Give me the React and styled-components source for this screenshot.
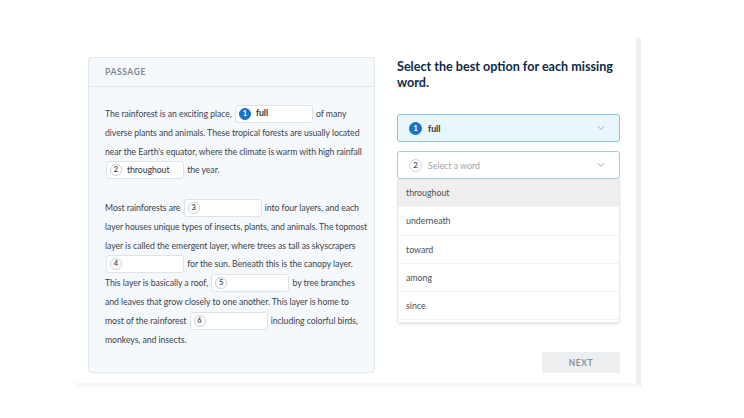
import styled, { createGlobalStyle } from "styled-components";
import { ChevronDown } from "lucide-react";

const Global = createGlobalStyle`
  body {
    margin: 0;
    background: #ffffff;
    font-family: "Lato", "Liberation Sans", sans-serif;
  }
`;

const Frame = styled.div`
  margin: 38px 0 0 75px;
  width: 566px;
  height: 349px;
  box-sizing: border-box;
  border-right: 5px solid #eeeff1;
  border-bottom: 4px solid #f7f7f7;
  display: flex;
  gap: 22px;
  padding: 19px 0 0 13px;
`;

const Card = styled.section`
  width: 287px;
  height: 316px;
  box-sizing: border-box;
  background: #f5f9fb;
  border: 1px solid #e1e7eb;
  border-radius: 4px;
`;

const CardHead = styled.div`
  height: 29px;
  box-sizing: border-box;
  border-bottom: 1px solid #e1e7eb;
  padding: 0 16px;
  display: flex;
  align-items: center;
  font-size: 8.5px;
  font-weight: 700;
  letter-spacing: 0.6px;
  color: #7d878f;
`;

const Body = styled.div`
  padding: 18px 16px 0 16px;
`;

const Para = styled.p`
  margin: 0 0 18.8px 0;
  font-size: 8.7px;
  line-height: 18.8px;
  letter-spacing: -0.05px;
  color: #3a444e;
  white-space: nowrap;
`;

const Blank = styled.span`
  display: inline-flex;
  align-items: center;
  gap: 5px;
  vertical-align: middle;
  width: 78px;
  height: 18px;
  box-sizing: border-box;
  margin: -2px 1px 0;
  padding-left: 3px;
  background: #ffffff;
  border: 1px solid #dde3e7;
  border-radius: 3px;
  font-size: 8.7px;
  font-weight: ${(p) => (p.$bold ? 700 : 400)};
  color: #2c3640;
`;

const Badge = styled.span`
  width: 12px;
  height: 12px;
  flex: none;
  box-sizing: border-box;
  border-radius: 50%;
  display: inline-flex;
  align-items: center;
  justify-content: center;
  font-size: 7.5px;
  font-weight: 700;
  line-height: 1;
  color: ${(p) => (p.$active ? "#ffffff" : "#4a545c")};
  background: ${(p) => (p.$active ? "#1673c6" : "#ffffff")};
  border: 1px solid ${(p) => (p.$active ? "#1673c6" : "#c9d0d5")};
`;

const Side = styled.div`
  width: 223px;
  height: 316px;
  display: flex;
  flex-direction: column;
`;

const Title = styled.h2`
  margin: 0 0 23px 0;
  padding-top: 2px;
  font-size: 12.6px;
  line-height: 16px;
  font-weight: 700;
  color: #0e2a47;
`;

const Select = styled.div`
  height: 28px;
  box-sizing: border-box;
  display: flex;
  align-items: center;
  gap: 6px;
  padding: 0 12px 0 11px;
  border: 1px solid ${(p) => (p.$active ? "#8cc4e2" : "#9dcbe4")};
  border-radius: 3px;
  background: ${(p) => (p.$active ? "#e9f6fc" : "#ffffff")};
  font-size: 8.8px;
  color: ${(p) => (p.$placeholder ? "#9aa3aa" : "#25303a")};
  font-weight: ${(p) => (p.$placeholder ? 400 : 700)};
  margin-bottom: 9px;

  svg {
    margin-left: auto;
    color: #8d969d;
  }
`;

const SelectBadge = styled(Badge)`
  width: 13px;
  height: 13px;
  font-size: 8px;
`;

const Anchor = styled.div`
  position: relative;
`;

const Menu = styled.ul`
  position: absolute;
  top: -9px;
  left: 0;
  right: 0;
  margin: 0;
  padding: 0 0 2px 0;
  list-style: none;
  background: #ffffff;
  border: 1px solid #e6e8ea;
  border-top: none;
  border-radius: 0 0 3px 3px;
  box-shadow: 0 2px 3px rgba(0, 0, 0, 0.08);
`;

const Option = styled.li`
  height: 27.3px;
  display: flex;
  align-items: center;
  padding-left: 8px;
  font-size: 8.8px;
  color: #4a4f54;
  background: ${(p) => (p.$hover ? "#efefef" : "#ffffff")};
  border-bottom: 1px solid #f1f2f3;
`;

const Next = styled.button`
  margin-top: auto;
  align-self: flex-end;
  width: 78px;
  height: 21px;
  border: none;
  border-radius: 2px;
  background: #eceef0;
  color: #8c9197;
  font-family: inherit;
  font-size: 8.5px;
  font-weight: 700;
  letter-spacing: 0.6px;
`;

function Gap({ n, word, active }) {
  return (
    <Blank $bold={active}>
      <Badge $active={active}>{n}</Badge>
      {word}
    </Blank>
  );
}

const options = ["throughout", "underneath", "toward", "among", "since"];

export default function App() {
  return (
    <>
      <Global />
      <Frame>
        <Card>
          <CardHead>PASSAGE</CardHead>
          <Body>
            <Para>
              The rainforest is an exciting place, <Gap n={1} word="full" active /> of many
              <br />
              diverse plants and animals. These tropical forests are usually located
              <br />
              near the Earth's equator, where the climate is warm with high rainfall
              <br />
              <Gap n={2} word="throughout" /> the year.
            </Para>
            <Para>
              Most rainforests are <Gap n={3} /> into four layers, and each
              <br />
              layer houses unique types of insects, plants, and animals. The topmost
              <br />
              layer is called the emergent layer, where trees as tall as skyscrapers
              <br />
              <Gap n={4} /> for the sun. Beneath this is the canopy layer.
              <br />
              This layer is basically a roof, <Gap n={5} /> by tree branches
              <br />
              and leaves that grow closely to one another. This layer is home to
              <br />
              most of the rainforest <Gap n={6} /> including colorful birds,
              <br />
              monkeys, and insects.
            </Para>
          </Body>
        </Card>
        <Side>
          <Title>Select the best option for each missing word.</Title>
          <Select $active>
            <SelectBadge $active>1</SelectBadge>
            full
            <ChevronDown size={12} strokeWidth={1.5} />
          </Select>
          <Select $placeholder>
            <SelectBadge>2</SelectBadge>
            Select a word
            <ChevronDown size={12} strokeWidth={1.5} />
          </Select>
          <Anchor>
            <Menu>
              {options.map((o, i) => (
                <Option key={o} $hover={i === 0}>
                  {o}
                </Option>
              ))}
            </Menu>
          </Anchor>
          <Next>NEXT</Next>
        </Side>
      </Frame>
    </>
  );
}
